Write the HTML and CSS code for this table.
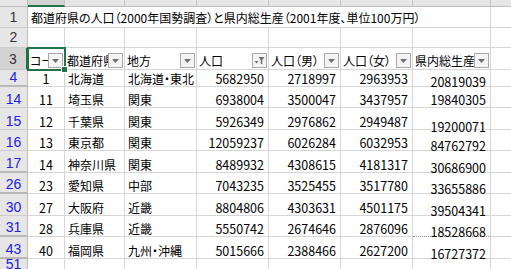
FILE: index.html
```html
<!DOCTYPE html>
<html lang="ja">
<head>
<meta charset="utf-8">
<link rel="stylesheet" href="styles.css">
</head>
<body>
<div class="sheet">
  <!-- column header strip -->
  <div class="ch corner"></div>
  <div class="ch sel"></div>
  <div class="ch"></div><div class="ch"></div><div class="ch"></div><div class="ch"></div><div class="ch"></div><div class="ch"></div><div class="ch"></div>

  <!-- row 1 -->
  <div class="rh">1</div>
  <div class="c title">都道府県の人口（2000年国勢調査）と県内総生産（2001年度、単位100万円）</div>
  <div class="c"></div>

  <!-- row 2 -->
  <div class="rh">2</div>
  <div class="c"></div><div class="c"></div><div class="c"></div><div class="c"></div><div class="c"></div><div class="c"></div><div class="c"></div><div class="c"></div>

  <!-- row 3 -->
  <div class="rh rsel">3</div>
  <div class="c hd active"><span class="lbl">コード</span><span class="fb"><svg viewBox="0 0 13 13"><path d="M3 5h7l-3.5 4z"/></svg></span><span class="handle"></span></div>
  <div class="c hd"><span class="lbl">都道府県</span><span class="fb"><svg viewBox="0 0 13 13"><path d="M3 5h7l-3.5 4z"/></svg></span></div>
  <div class="c hd"><span class="lbl">地方</span><span class="fb"><svg viewBox="0 0 13 13"><path d="M3 5h7l-3.5 4z"/></svg></span></div>
  <div class="c hd"><span class="lbl">人口</span><span class="fb"><svg viewBox="0 0 13 13"><path d="M1.5 7h4l-2 2.5z"/><path d="M5.5 3h6l-2.2 3v4.5l-1.6-1v-3.5z"/></svg></span></div>
  <div class="c hd"><span class="lbl">人口（男）</span><span class="fb"><svg viewBox="0 0 13 13"><path d="M3 5h7l-3.5 4z"/></svg></span></div>
  <div class="c hd"><span class="lbl">人口（女）</span><span class="fb"><svg viewBox="0 0 13 13"><path d="M3 5h7l-3.5 4z"/></svg></span></div>
  <div class="c hd"><span class="lbl">県内総生産</span><span class="fb"><svg viewBox="0 0 13 13"><path d="M3 5h7l-3.5 4z"/></svg></span></div>
  <div class="c"></div>

  <!-- row 4 -->
  <div class="rh blue gap">4</div>
  <div class="c num ctr">1</div><div class="c">北海道</div><div class="c">北海道・東北</div>
  <div class="c num">5682950</div><div class="c num">2718997</div><div class="c num">2963953</div><div class="c num g"><span class="low3">20819039</span></div><div class="c"></div>

  <!-- row 14 -->
  <div class="rh blue">14</div>
  <div class="c num ctr">11</div><div class="c">埼玉県</div><div class="c">関東</div>
  <div class="c num">6938004</div><div class="c num">3500047</div><div class="c num">3437957</div><div class="c num g"><span>19840305</span></div><div class="c"></div>

  <!-- row 15 -->
  <div class="rh blue">15</div>
  <div class="c num ctr">12</div><div class="c">千葉県</div><div class="c">関東</div>
  <div class="c num">5926349</div><div class="c num">2976862</div><div class="c num">2949487</div><div class="c num g"><span class="low5">19200071</span></div><div class="c"></div>

  <!-- row 16 -->
  <div class="rh blue">16</div>
  <div class="c num ctr">13</div><div class="c">東京都</div><div class="c">関東</div>
  <div class="c num">12059237</div><div class="c num">6026284</div><div class="c num">6032953</div><div class="c num g"><span class="low3">84762792</span></div><div class="c"></div>

  <!-- row 17 -->
  <div class="rh blue gap">17</div>
  <div class="c num ctr">14</div><div class="c">神奈川県</div><div class="c">関東</div>
  <div class="c num">8489932</div><div class="c num">4308615</div><div class="c num">4181317</div><div class="c num g"><span class="low3">30686900</span></div><div class="c"></div>

  <!-- row 26 -->
  <div class="rh blue gap">26</div>
  <div class="c num ctr">23</div><div class="c">愛知県</div><div class="c">中部</div>
  <div class="c num">7043235</div><div class="c num">3525455</div><div class="c num">3517780</div><div class="c num g"><span class="low3">33655886</span></div><div class="c"></div>

  <!-- row 30 -->
  <div class="rh blue">30</div>
  <div class="c num ctr">27</div><div class="c">大阪府</div><div class="c">近畿</div>
  <div class="c num">8804806</div><div class="c num">4303631</div><div class="c num">4501175</div><div class="c num g"><span class="low3">39504341</span></div><div class="c"></div>

  <!-- row 31 -->
  <div class="rh blue gap">31</div>
  <div class="c num ctr">28</div><div class="c">兵庫県</div><div class="c">近畿</div>
  <div class="c num">5550742</div><div class="c num">2674646</div><div class="c num">2876096</div><div class="c num g dotted"><span class="low3">18528668</span></div><div class="c"></div>

  <!-- row 43 -->
  <div class="rh blue gap">43</div>
  <div class="c num ctr">40</div><div class="c">福岡県</div><div class="c">九州・沖縄</div>
  <div class="c num">5015666</div><div class="c num">2388466</div><div class="c num">2627200</div><div class="c num g"><span class="low3">16727372</span></div><div class="c"></div>

  <!-- row 51 -->
  <div class="rh blue">51</div>
  <div class="c"></div><div class="c"></div><div class="c"></div><div class="c"></div><div class="c"></div><div class="c"></div><div class="c"></div><div class="c"></div>
</div>
</body>
</html>
```
FILE: styles.css
```css
html, body {
  margin: 0;
  padding: 0;
  background: #ffffff;
  overflow: hidden;
}

.sheet {
  display: grid;
  grid-template-columns: 28px 37px 60px 72px 72px 72px 72px 78px 40px;
  grid-template-rows: 7px 21px 20px 22px 17px 21px 22px 21px 22px 21px 22px 21px 22px 14px;
  width: 511px;
  height: 269px;
  overflow: hidden;
  font-family: "Noto Sans CJK JP", sans-serif;
  font-size: 12px;
  color: #000;
  font-feature-settings: "palt";
}

.ch {
  background: #e6e6e6;
  border-right: 1px solid #c4c4c4;
  border-bottom: 1px solid #bdbdbd;
  box-sizing: border-box;
}
.ch.corner { background: #e6e6e6; border-right-color: #bdbdbd; }
.ch.sel {
  background: #d3d3d3;
  border-bottom: 2px solid #217346;
}

.rh {
  background: #e6e6e6;
  border-right: 1px solid #bdbdbd;
  border-bottom: 1px solid #cdcdcd;
  box-sizing: border-box;
  display: flex;
  justify-content: center;
  align-items: flex-end;
  font-family: "Liberation Sans Narrow", "Liberation Sans", sans-serif;
  font-size: 14px;
  line-height: 14px;
  color: #333;
  padding-bottom: 3px;
  overflow: visible;
}
.rh.rsel {
  background: #d3d3d3;
  border-right: 2px solid #217346;
}
.rh.blue { color: #2222e0; padding-bottom: 1px; }
.rh.gap { border-bottom: 2px solid #b8b8b8; }

.c {
  border-right: 1px solid #d6d6d6;
  border-bottom: 1px solid #d6d6d6;
  box-sizing: border-box;
  display: flex;
  align-items: flex-end;
  white-space: nowrap;
  overflow: hidden;
  padding: 0 3px 1px 3px;
  line-height: 13px;
  min-width: 0;
}

.title {
  grid-column: span 7;
  padding-bottom: 3px;
  overflow: visible;
}

.num {
  justify-content: flex-end;
  font-family: "Liberation Sans Narrow", "Noto Sans CJK JP", sans-serif;
  font-size: 12.5px;
  padding-right: 4px;
}
.num.ctr { justify-content: center; padding-right: 3px; }
.g { overflow: visible; }
.low3 { margin-bottom: -3px; }
.low5 { margin-bottom: -5px; }
.dotted { border-bottom: 1px dotted #8a8a8a; }

.hd {
  padding: 0 1px 1px 2px;
  align-items: flex-end;
}
.hd .lbl {
  flex: 1 1 auto;
  min-width: 0;
  overflow: hidden;
  padding-bottom: 1px;
}
.fb {
  flex: 0 0 auto;
  width: 15px;
  height: 15px;
  box-sizing: border-box;
  border: 1px solid #a9a9a9;
  background: #f4f4f4;
  display: flex;
  align-items: center;
  justify-content: center;
}
.fb svg {
  width: 13px;
  height: 13px;
  fill: #707070;
}

.active {
  position: relative;
  overflow: visible;
  outline: 2px solid #217346;
  outline-offset: -1px;
  z-index: 2;
}
.handle {
  position: absolute;
  right: -4px;
  bottom: -4px;
  width: 5px;
  height: 5px;
  background: #217346;
  border: 1px solid #fff;
}
```
